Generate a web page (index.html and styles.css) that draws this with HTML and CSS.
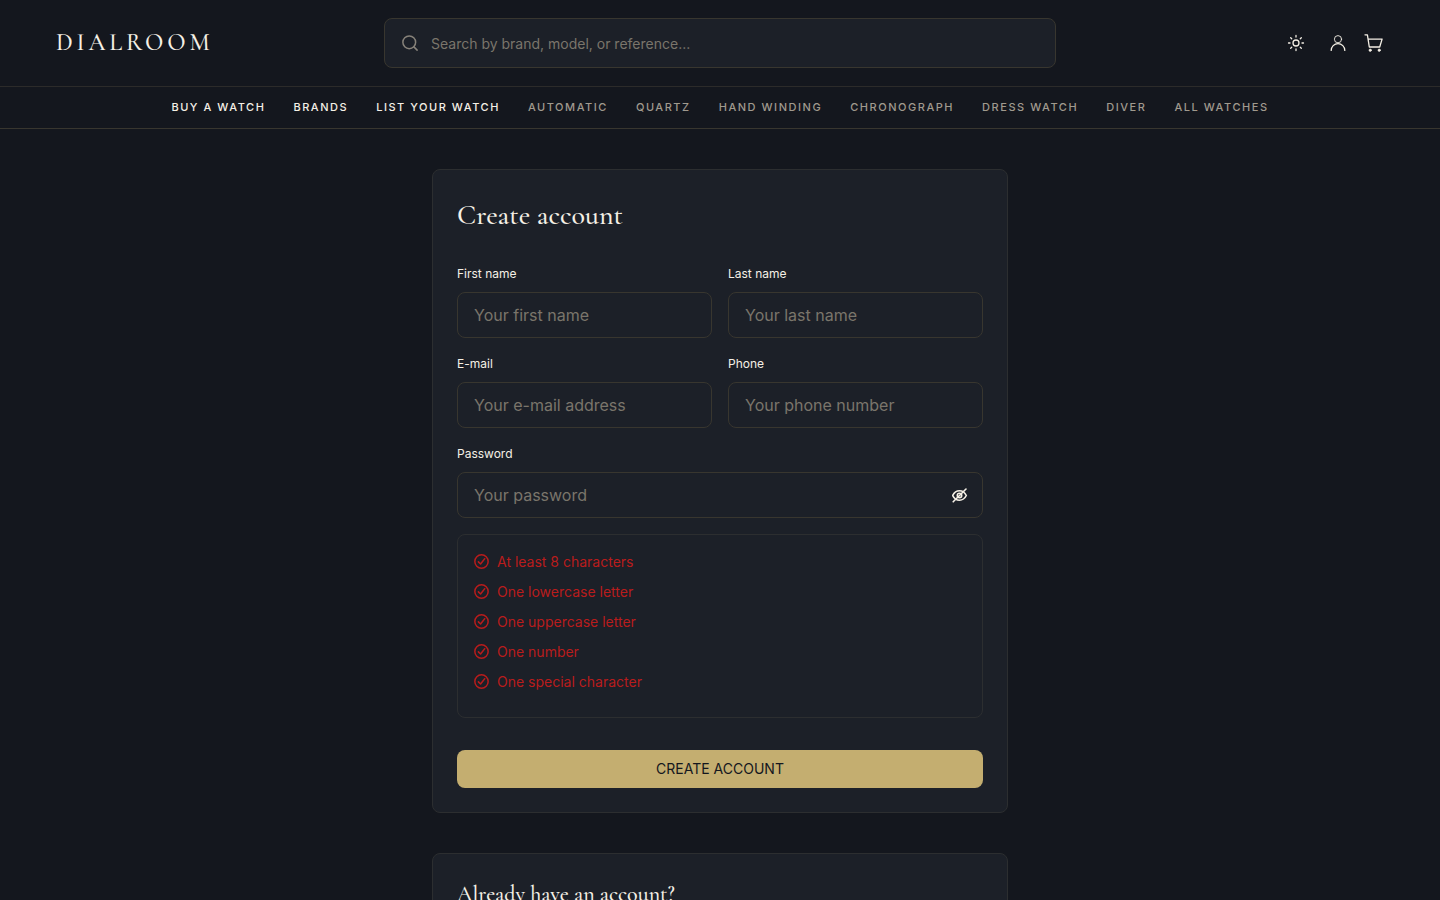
FILE: index.html
```html
<!DOCTYPE html>
<html lang="en">
<head>
<meta charset="utf-8">
<title>Dialroom – Create account</title>
<link rel="stylesheet" href="styles.css">
</head>
<body>
<header class="site-header">
  <div class="topbar">
    <a class="logo">DIALROOM</a>
    <label class="search">
      <svg class="search-icon" viewBox="0 0 24 24"><circle cx="11" cy="11" r="8.5"/><path d="M21.500 21.500l-4.300-4.300"/></svg>
      <input class="search-input" type="text" placeholder="Search by brand, model, or reference...">
    </label>
    <div class="actions">
      <svg class="icon icon-sun" viewBox="0 0 24 24"><circle cx="12" cy="12" r="4"/><path d="M12 2v2M12 20v2M4.900 4.900l1.400 1.400M17.700 17.700l1.400 1.400M2 12h2M20 12h2M6.300 17.700l-1.400 1.400M19.100 4.900l-1.400 1.400"/></svg>
      <svg class="icon icon-user" viewBox="0 0 18 18"><circle class="head" cx="9" cy="5.200" r="3.600"/><path d="M2.200 16.400a6.800 6.800 0 0 1 13.600 0"/></svg>
      <svg class="icon icon-cart" viewBox="0 0 20 20"><path d="M1 1.800h2.400l1.900 12.200h10.400l2.400-7.900H4"/><circle class="wheel" cx="6.200" cy="17.200" r="1.200"/><circle class="wheel" cx="15.200" cy="17.200" r="1.200"/></svg>
    </div>
  </div>
  <nav class="nav">
    <a class="nav-link strong">BUY A WATCH</a>
    <a class="nav-link strong">BRANDS</a>
    <a class="nav-link strong">LIST YOUR WATCH</a>
    <a class="nav-link">AUTOMATIC</a>
    <a class="nav-link">QUARTZ</a>
    <a class="nav-link">HAND WINDING</a>
    <a class="nav-link">CHRONOGRAPH</a>
    <a class="nav-link">DRESS WATCH</a>
    <a class="nav-link">DIVER</a>
    <a class="nav-link">ALL WATCHES</a>
  </nav>
</header>
<main class="page">
  <section class="card">
    <h1 class="title">Create account</h1>
    <form class="form">
      <label class="field"><span class="label">First name</span><input class="input" type="text" placeholder="Your first name"></label>
      <label class="field"><span class="label">Last name</span><input class="input" type="text" placeholder="Your last name"></label>
      <label class="field"><span class="label">E-mail</span><input class="input" type="text" placeholder="Your e-mail address"></label>
      <label class="field"><span class="label">Phone</span><input class="input" type="text" placeholder="Your phone number"></label>
      <label class="field wide"><span class="label">Password</span>
        <span class="password"><input class="input" type="password" placeholder="Your password">
          <svg class="eye" viewBox="0 0 16 16"><path d="M.700 8.500C2.300 5.300 4.800 3.800 7.500 3.800S12.700 5.300 14.300 8.500C12.700 11.700 10.200 13.200 7.500 13.200S2.300 11.700 .700 8.500z"/><circle cx="7.500" cy="8.500" r="2.200"/><path d="M1.200 14.800L14 2"/></svg>
        </span>
      </label>
      <ul class="rules wide">
        <li class="rule"><svg class="check" viewBox="0 0 16 16"><circle cx="8" cy="8" r="7.100"/><path d="M4.700 8.400l2.300 2.200 4.400-5.600"/></svg>At least 8 characters</li>
        <li class="rule"><svg class="check" viewBox="0 0 16 16"><circle cx="8" cy="8" r="7.100"/><path d="M4.700 8.400l2.300 2.200 4.400-5.600"/></svg>One lowercase letter</li>
        <li class="rule"><svg class="check" viewBox="0 0 16 16"><circle cx="8" cy="8" r="7.100"/><path d="M4.700 8.400l2.300 2.200 4.400-5.600"/></svg>One uppercase letter</li>
        <li class="rule"><svg class="check" viewBox="0 0 16 16"><circle cx="8" cy="8" r="7.100"/><path d="M4.700 8.400l2.300 2.200 4.400-5.600"/></svg>One number</li>
        <li class="rule"><svg class="check" viewBox="0 0 16 16"><circle cx="8" cy="8" r="7.100"/><path d="M4.700 8.400l2.300 2.200 4.400-5.600"/></svg>One special character</li>
      </ul>
      <button class="submit wide" type="button">CREATE ACCOUNT</button>
    </form>
  </section>
  <section class="card">
    <h2 class="subtitle">Already have an account?</h2>
  </section>
</main>
</body>
</html>
```
FILE: styles.css
```css
* { box-sizing: border-box; }
body {
  margin: 0;
  height: 900px;
  overflow: hidden;
  background: #14171e;
  color: #f5f0e6;
  font-family: Inter, sans-serif;
}
.topbar {
  display: grid;
  grid-template-columns: 1fr 672px 1fr;
  align-items: center;
  height: 87px;
  padding: 0 56px;
  border-bottom: 1px solid #2c2b2a;
}
.logo {
  font: 500 24px/28px "Cormorant Garamond", "Liberation Serif", serif;
  letter-spacing: 3.84px;
}
.search {
  display: flex;
  align-items: center;
  gap: 12px;
  height: 50px;
  padding: 0 16px;
  border: 1px solid #38362f;
  border-radius: 8px;
  background: #1c2028;
}
.search-icon {
  width: 18px;
  height: 18px;
  fill: none;
  stroke: #87827a;
  stroke-width: 2;
  stroke-linecap: round;
}
.search-input {
  flex: 1;
  padding: 2px 0 0;
  border: 0;
  outline: 0;
  background: none;
  font: 14px/20px Inter, sans-serif;
}
input::placeholder { color: #7a756b; opacity: 1; }
.actions {
  display: flex;
  justify-content: flex-end;
  align-items: center;
}
.icon {
  fill: none;
  stroke: #f5f0e6;
  stroke-linecap: round;
  stroke-linejoin: round;
}
.icon-sun { width: 18px; height: 18px; margin-right: 24px; stroke-width: 1.7; }
.icon-user { width: 18px; height: 18px; margin-right: 17px; stroke-width: 1.3; }
.head { stroke-width: .9; }
.icon-cart { width: 20px; height: 20px; stroke-width: 1.3; }
.wheel { fill: #f5f0e6; stroke-width: .6; }
.nav {
  display: flex;
  justify-content: center;
  align-items: center;
  gap: 28px;
  height: 42px;
  padding-bottom: 2px;
  border-bottom: 1px solid #38362f;
}
.nav-link {
  font-size: 11px;
  line-height: 16px;
  font-weight: 500;
  letter-spacing: 1.54px;
  color: #a09a8e;
  white-space: nowrap;
}
.strong { color: #f5f0e6; }
.page {
  display: flex;
  flex-direction: column;
  gap: 40px;
  width: 576px;
  margin: 0 auto;
  padding-top: 40px;
}
.card {
  padding: 24px;
  border: 1px solid #2c2e30;
  border-radius: 8px;
  background: #1c2028;
}
.title {
  margin: 0 0 29px;
  padding-top: 1px;
  font: 500 28px/40px "Cormorant Garamond", "Liberation Serif", serif;
}
.subtitle {
  margin: 0;
  font: 500 22px/32px "Cormorant Garamond", "Liberation Serif", serif;
}
.form {
  display: grid;
  grid-template-columns: 1fr 1fr;
  gap: 16px;
}
.field { display: flex; flex-direction: column; gap: 8px; }
.wide { grid-column: 1 / -1; }
.label { font-size: 12px; line-height: 20px; }
.input {
  width: 100%;
  height: 46px;
  padding: 0 16px;
  border: 1px solid #38362f;
  border-radius: 8px;
  outline: 0;
  background: #1c2028;
  font: 16px/24px Inter, sans-serif;
}
.password { position: relative; display: block; height: 46px; }
.eye {
  position: absolute;
  right: 15px;
  top: 15px;
  width: 16px;
  height: 16px;
  fill: none;
  stroke: #f5f0e6;
  stroke-width: 1.6;
  stroke-linecap: round;
}
.rules {
  height: 184px;
  margin: 0;
  padding: 11px 16px;
  border: 1px solid #2c2e30;
  border-radius: 8px;
  list-style: none;
}
.rule {
  display: flex;
  align-items: center;
  gap: 8px;
  height: 30px;
  font-size: 14px;
  color: #b91c1c;
}
.check {
  width: 15px;
  height: 15px;
  fill: none;
  stroke: #b91c1c;
  stroke-width: 1.6;
  stroke-linecap: round;
  stroke-linejoin: round;
}
.submit {
  height: 38px;
  margin-top: 16px;
  padding: 0;
  border: 0;
  border-radius: 8px;
  background: #c4ae70;
  color: #14171e;
  font: 14px/20px Inter, sans-serif;
}
```
